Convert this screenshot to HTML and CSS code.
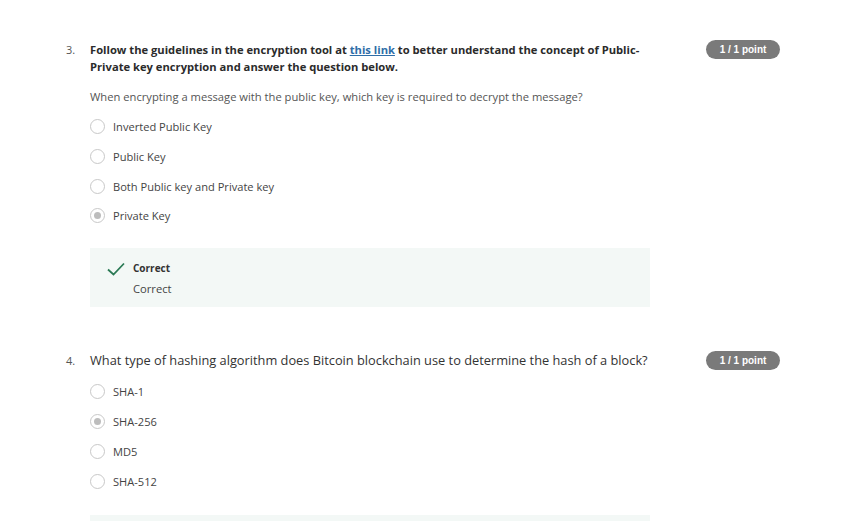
FILE: index.html
```html
<!DOCTYPE html>
<html>
<head>
<meta charset="utf-8">
<link rel="stylesheet" href="styles.css">
</head>
<body>
<div class="page">
  <section class="question q3">
    <div class="num">3.</div>
    <div class="content">
      <div class="title bold">Follow the guidelines in the encryption tool at <a href="#">this link</a> to better understand the concept of Public-Private key encryption and answer the question below.</div>
      <p class="prompt">When encrypting a message with the public key, which key is required to decrypt the message?</p>
      <ul class="options">
        <li><span class="radio"></span>Inverted Public Key</li>
        <li><span class="radio"></span>Public Key</li>
        <li><span class="radio"></span>Both Public key and Private key</li>
        <li><span class="radio checked"></span>Private Key</li>
      </ul>
      <div class="feedback">
        <svg class="check" width="18" height="14" viewBox="0 0 18 14"><path d="M1 7.5 L6.5 12.5 L17 1.5" fill="none" stroke="#2b7a55" stroke-width="1.8"/></svg>
        <div class="fb-text">
          <div class="fb-title">Correct</div>
          <div class="fb-body">Correct</div>
        </div>
      </div>
    </div>
    <div class="badge">1 / 1 point</div>
  </section>

  <section class="question q4">
    <div class="num">4.</div>
    <div class="content">
      <div class="title big">What type of hashing algorithm does Bitcoin blockchain use to determine the hash of a block?</div>
      <ul class="options">
        <li><span class="radio"></span>SHA-1</li>
        <li><span class="radio checked"></span>SHA-256</li>
        <li><span class="radio"></span>MD5</li>
        <li><span class="radio"></span>SHA-512</li>
      </ul>
      <div class="feedback"></div>
    </div>
    <div class="badge">1 / 1 point</div>
  </section>
</div>
</body>
</html>
```
FILE: styles.css
```css
html, body {
  margin: 0;
  padding: 0;
  background: #fff;
}
body {
  font-family: "Open Sans", "Noto Sans", sans-serif;
  color: #333;
  overflow: hidden;
  height: 521px;
}
.page {
  padding: 41px 0 0 66px;
}
.question {
  display: flex;
  align-items: flex-start;
}
.q4 {
  margin-top: 43px;
}
.num {
  width: 24px;
  font-size: 11px;
  line-height: 17px;
  color: #555;
}
.q4 .num {
  line-height: 21px;
}
.content {
  width: 560px;
}
.title {
  font-size: 11.2px;
  line-height: 17px;
  color: #2b2b2b;
}
.title.bold {
  font-weight: 700;
}
.title a {
  color: #2f6ea8;
  text-decoration: underline;
}
.title.big {
  font-size: 12.8px;
  line-height: 21px;
  color: #333;
}
.prompt {
  margin: 13px 0 0;
  font-size: 11.2px;
  line-height: 17px;
  color: #555;
}
.options {
  list-style: none;
  margin: 7px 0 0;
  padding: 0;
}
.q4 .options {
  margin-top: 6px;
}
.options li {
  display: flex;
  align-items: center;
  height: 29.7px;
  font-size: 11.1px;
  color: #444;
}
.q4 .options li {
  height: 30px;
}
.radio {
  box-sizing: border-box;
  width: 15px;
  height: 15px;
  border: 1.5px solid #c8c8c8;
  border-radius: 50%;
  margin-right: 8px;
  display: flex;
  align-items: center;
  justify-content: center;
}
.radio.checked::after {
  content: "";
  width: 7px;
  height: 7px;
  border-radius: 50%;
  background: #bdbdbd;
}
.feedback {
  margin-top: 17px;
  background: #f3f8f6;
  height: 59px;
  box-sizing: border-box;
  padding: 12px 0 0 17px;
  display: flex;
  align-items: flex-start;
}
.q4 .feedback {
  margin-top: 18px;
  height: 7px;
}
.check {
  margin-top: 2px;
  margin-right: 8px;
}
.fb-title {
  font-size: 10px;
  font-weight: 700;
  line-height: 17px;
  color: #333;
}
.fb-body {
  margin-top: 3px;
  font-size: 11.2px;
  line-height: 17px;
  color: #444;
}
.badge {
  margin-left: 56px;
  width: 74px;
  height: 19px;
  border-radius: 10px;
  background: #7a7a7a;
  color: #fff;
  font-family: "Liberation Sans", Arial, sans-serif;
  font-weight: 700;
  font-size: 10px;
  line-height: 19px;
  text-align: center;
  margin-top: -1px;
}
.q4 .badge {
  margin-top: 1px;
}
```
